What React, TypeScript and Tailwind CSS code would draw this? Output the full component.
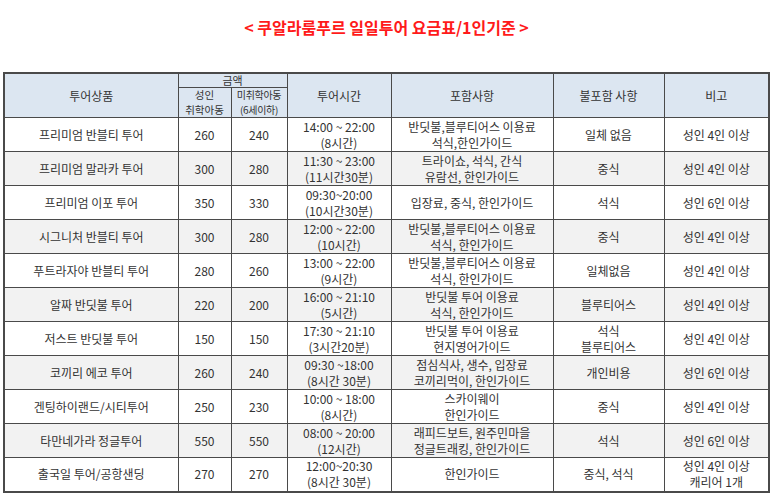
import React from "react";

type Row = {
  name: string;
  adult: string;
  child: string;
  time: string[];
  inc: string[];
  exc: string[];
  note: string[];
};

const rows: Row[] = [
  { name: "프리미엄 반블티 투어", adult: "260", child: "240", time: ["14:00 ~ 22:00", "(8시간)"], inc: ["반딧불,블루티어스 이용료", "석식,한인가이드"], exc: ["일체 없음"], note: ["성인 4인 이상"] },
  { name: "프리미엄 말라카 투어", adult: "300", child: "280", time: ["11:30 ~ 23:00", "(11시간30분)"], inc: ["트라이쇼, 석식, 간식", "유람선, 한인가이드"], exc: ["중식"], note: ["성인 4인 이상"] },
  { name: "프리미엄 이포 투어", adult: "350", child: "330", time: ["09:30~20:00", "(10시간30분)"], inc: ["입장료, 중식, 한인가이드"], exc: ["석식"], note: ["성인 6인 이상"] },
  { name: "시그니처 반블티 투어", adult: "300", child: "280", time: ["12:00 ~ 22:00", "(10시간)"], inc: ["반딧불,블루티어스 이용료", "석식, 한인가이드"], exc: ["중식"], note: ["성인 4인 이상"] },
  { name: "푸트라자야 반블티 투어", adult: "280", child: "260", time: ["13:00 ~ 22:00", "(9시간)"], inc: ["반딧불,블루티어스 이용료", "석식, 한인가이드"], exc: ["일체없음"], note: ["성인 4인 이상"] },
  { name: "알짜 반딧불 투어", adult: "220", child: "200", time: ["16:00 ~ 21:10", "(5시간)"], inc: ["반딧불 투어 이용료", "석식, 한인가이드"], exc: ["블루티어스"], note: ["성인 4인 이상"] },
  { name: "저스트 반딧불 투어", adult: "150", child: "150", time: ["17:30 ~ 21:10", "(3시간20분)"], inc: ["반딧불 투어 이용료", "현지영어가이드"], exc: ["석식", "블루티어스"], note: ["성인 4인 이상"] },
  { name: "코끼리 에코 투어", adult: "260", child: "240", time: ["09:30 ~18:00", "(8시간 30분)"], inc: ["점심식사, 생수, 입장료", "코끼리먹이, 한인가이드"], exc: ["개인비용"], note: ["성인 6인 이상"] },
  { name: "겐팅하이랜드/시티투어", adult: "250", child: "230", time: ["10:00 ~ 18:00", "(8시간)"], inc: ["스카이웨이", "한인가이드"], exc: ["중식"], note: ["성인 4인 이상"] },
  { name: "타만네가라 정글투어", adult: "550", child: "550", time: ["08:00 ~ 20:00", "(12시간)"], inc: ["래피드보트, 원주민마을", "정글트래킹, 한인가이드"], exc: ["석식"], note: ["성인 6인 이상"] },
  { name: "출국일 투어/공항샌딩", adult: "270", child: "270", time: ["12:00~20:30", "(8시간 30분)"], inc: ["한인가이드"], exc: ["중식, 석식"], note: ["성인 4인 이상", "캐리어 1개"] },
];

const Lines = ({ l }: { l: string[] }) => (
  <>
    {l.map((t, i) => (
      <div key={i}>{t}</div>
    ))}
  </>
);

const td = "border border-[#4a4a4a] text-center align-middle p-0";
const th = "border border-[#4a4a4a] text-center align-middle p-0 font-normal";

export default function App() {
  return (
    <div
      className="w-[773px] h-[498px] bg-white text-[#333] overflow-hidden"
      style={{ fontFamily: '"Noto Sans CJK KR", "Noto Sans", sans-serif' }}
    >
      <div className="h-[72px] pt-[15px] text-center">
        <span className="text-[16px] font-bold text-[#ff1a1a] leading-[24px]">
          &lt; 쿠알라룸푸르 일일투어 요금표/1인기준 &gt;
        </span>
      </div>
      <div className="pl-[3px]">
        <table className="table-fixed border-collapse border-2 border-[#4a4a4a] w-[765px] text-[12px] leading-[16px]">
          <colgroup>
            <col className="w-[174px]" />
            <col className="w-[53px]" />
            <col className="w-[56px]" />
            <col className="w-[104px]" />
            <col className="w-[162px]" />
            <col className="w-[111px]" />
            <col className="w-[105px]" />
          </colgroup>
          <thead className="bg-[#dce6f1]">
            <tr className="h-[14px]">
              <th rowSpan={2} className={th}>투어상품</th>
              <th colSpan={2} className={`${th} text-[11px] leading-[13px]`}>금액</th>
              <th rowSpan={2} className={th}>투어시간</th>
              <th rowSpan={2} className={th}>포함사항</th>
              <th rowSpan={2} className={th}>불포함 사항</th>
              <th rowSpan={2} className={th}>비고</th>
            </tr>
            <tr className="h-[29px]">
              <th className={`${th} text-[10.5px] leading-[14.5px]`}>
                <div>성인</div>
                <div>취학아동</div>
              </th>
              <th className={`${th} leading-[14.5px] text-[10px] tracking-[-0.3px]`}>
                <div>미취학아동</div>
                <div>(6세이하)</div>
              </th>
            </tr>
          </thead>
          <tbody>
            {rows.map((r, i) => (
              <tr key={i} className={`h-[34px] ${i % 2 === 1 ? "bg-[#f2f2f2]" : "bg-white"}`}>
                <td className={td}>{r.name}</td>
                <td className={td}>{r.adult}</td>
                <td className={td}>{r.child}</td>
                <td className={td}><Lines l={r.time} /></td>
                <td className={td}><Lines l={r.inc} /></td>
                <td className={td}><Lines l={r.exc} /></td>
                <td className={td}><Lines l={r.note} /></td>
              </tr>
            ))}
          </tbody>
        </table>
      </div>
    </div>
  );
}
